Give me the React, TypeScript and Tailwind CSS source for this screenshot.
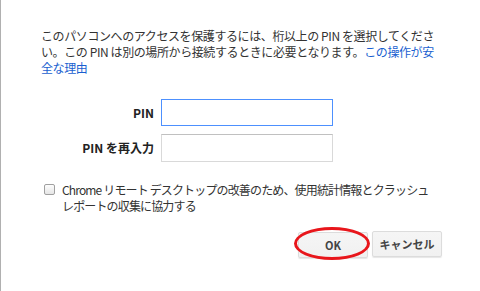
// App.tsx
export default function App() {
  return (
    <div
      className="h-[291px] w-[480px] overflow-hidden border-l border-[#b0b0b0] bg-white pl-[40px] pt-[28px] text-[#333]"
      style={{ fontFamily: '"Noto Sans CJK JP", "Liberation Sans", sans-serif' }}
    >
      <p className="w-[400px] text-[12px] leading-[16px] tracking-[-0.4px]">
        このパソコンへのアクセスを保護するには、桁以上の PIN を選択してください。この PIN は別の場所から接続するときに必要となります。
        <a href="#" className="text-[#1a5fd0]">
          この操作が安全な理由
        </a>
      </p>

      <div className="mt-[23px] grid grid-cols-[113px_172px] items-center gap-x-[7px] gap-y-[8px]">
        <label className="text-right text-[12px] font-bold text-[#222]">PIN</label>
        <input
          type="password"
          className="h-[27px] border border-[#4d90fe] bg-white px-2 outline-none"
        />
        <label className="text-right text-[12px] font-bold text-[#222]">PIN を再入力</label>
        <input
          type="password"
          className="h-[28px] border border-[#d9d9d9] border-t-[#c0c0c0] bg-white px-2 outline-none"
        />
      </div>

      <label className="mt-[20px] flex items-start gap-[7px] text-[12px] leading-[16px] tracking-[-0.85px]">
        <span className="mt-[2px] ml-[3px] h-[11px] w-[11px] shrink-0 rounded-[2px] border border-[#a0a0a0] bg-gradient-to-b from-[#fdfdfd] to-[#e6e6e6]" />
        <span className="w-[385px]">
          Chrome リモート デスクトップの改善のため、使用統計情報とクラッシュ
          <br />
          レポートの収集に協力する
        </span>
      </label>

      <div className="mt-[17px] flex w-[401px] justify-end gap-[4px]">
        <div className="relative">
          <button className="h-[26px] w-[70px] rounded-[2px] border border-[#dcdcdc] bg-gradient-to-b from-[#f5f5f5] to-[#f1f1f1] text-[11px] font-bold text-[#444] shadow-[0_1px_1px_rgba(0,0,0,0.1)]">
            OK
          </button>
          <span className="pointer-events-none absolute -left-[4px] -top-[4px] h-[33px] w-[76px] rounded-[50%] border-[3px] border-[#e8161b]" />
        </div>
        <button className="h-[26px] w-[70px] rounded-[2px] border border-[#dcdcdc] bg-gradient-to-b from-[#f5f5f5] to-[#f1f1f1] text-[11px] font-bold text-[#444] shadow-[0_1px_1px_rgba(0,0,0,0.1)]">
          キャンセル
        </button>
      </div>
    </div>
  );
}
